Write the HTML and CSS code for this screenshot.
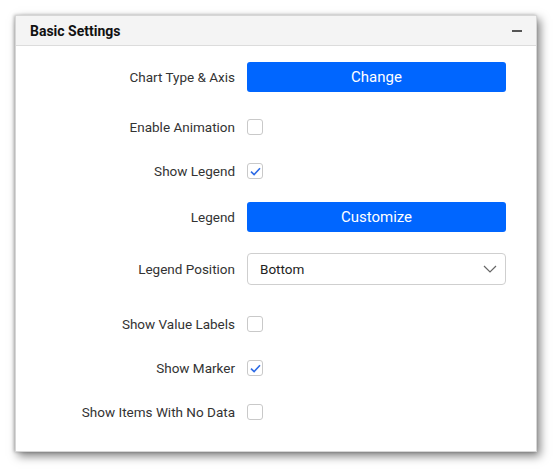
FILE: index.html
```html
<!DOCTYPE html>
<html>
<head>
<meta charset="utf-8">
<link rel="stylesheet" href="styles.css">
</head>
<body>
<div class="panel">
  <div class="panel-header">
    <span class="title">Basic Settings</span>
    <svg class="collapse" width="12" height="4" viewBox="0 0 12 4"><line x1="1" y1="2" x2="11" y2="2" stroke="#111" stroke-width="1.4"/></svg>
  </div>
  <div class="panel-body">
    <div class="row r1"><label>Chart Type &amp; Axis</label><button class="btn">Change</button></div>
    <div class="row r2"><label>Enable Animation</label><span class="check"></span></div>
    <div class="row r3"><label>Show Legend</label><span class="check on"><svg width="11" height="9" viewBox="0 0 11 9"><path d="M1 4.6 L4.1 7.6 L10 1.3" fill="none" stroke="#2d6be6" stroke-width="1.6"/></svg></span></div>
    <div class="row r4"><label>Legend</label><button class="btn">Customize</button></div>
    <div class="row r5"><label>Legend Position</label>
      <div class="select"><span>Bottom</span><svg width="14" height="8" viewBox="0 0 14 8"><path d="M1 1 L7 7 L13 1" fill="none" stroke="#666" stroke-width="1.2"/></svg></div>
    </div>
    <div class="row r6"><label>Show Value Labels</label><span class="check"></span></div>
    <div class="row r7"><label>Show Marker</label><span class="check on"><svg width="11" height="9" viewBox="0 0 11 9"><path d="M1 4.6 L4.1 7.6 L10 1.3" fill="none" stroke="#2d6be6" stroke-width="1.6"/></svg></span></div>
    <div class="row r8"><label>Show Items With No Data</label><span class="check"></span></div>
  </div>
</div>
</body>
</html>
```
FILE: styles.css
```css
html, body { margin: 0; padding: 0; background: #fff; }
html { height: 473px; }
body { padding: 15px 0 21px 15px; font-family: Roboto, "Liberation Sans", sans-serif; }
.panel {
  width: 520px;
  height: 435px;
  border: 1px solid #d6d6d6;
  background: #fff;
  box-shadow: 3px 4px 9px rgba(0,0,0,0.5), -1px 0 3px rgba(0,0,0,0.25);
}
.panel-header {
  height: 29px;
  background: #f4f4f4;
  border-bottom: 1px solid #dcdcdc;
  display: flex;
  align-items: center;
  justify-content: space-between;
  padding: 0 13px 0 14px;
}
.title { font-size: 14px; font-weight: 700; color: #111; }
.collapse { display: block; }
.panel-body { padding-top: 16px; }
.row {
  display: grid;
  grid-template-columns: 219px 259px;
  column-gap: 12px;
  align-items: center;
}
.row label { text-align: right; font-size: 13.5px; color: #333; }
.r1 { height: 30px; }
.r2 { height: 16px; margin-top: 27px; }
.r3 { height: 16px; margin-top: 28px; }
.r4 { height: 30px; margin-top: 23px; }
.r5 { height: 32px; margin-top: 21px; }
.r6 { height: 16px; margin-top: 31px; }
.r7 { height: 16px; margin-top: 28px; }
.r8 { height: 16px; margin-top: 28px; }
.btn {
  height: 30px;
  width: 259px;
  border: 0;
  border-radius: 3px;
  background: #0066ff;
  color: #fff;
  font-family: Roboto, "Liberation Sans", sans-serif;
  font-size: 15px;
  padding: 0;
}
.check {
  width: 16px; height: 16px;
  box-sizing: border-box;
  border: 1px solid #c9c9c9;
  border-radius: 3px;
  background: #fff;
  display: flex;
  align-items: center;
  justify-content: center;
}
.check svg { display: block; }
.select {
  box-sizing: border-box;
  height: 32px;
  width: 259px;
  border: 1px solid #cfcfcf;
  border-radius: 4px;
  display: flex;
  align-items: center;
  justify-content: space-between;
  padding: 0 8px 0 12px;
  font-size: 13.5px;
  color: #222;
}
.select svg { display: block; }
```
